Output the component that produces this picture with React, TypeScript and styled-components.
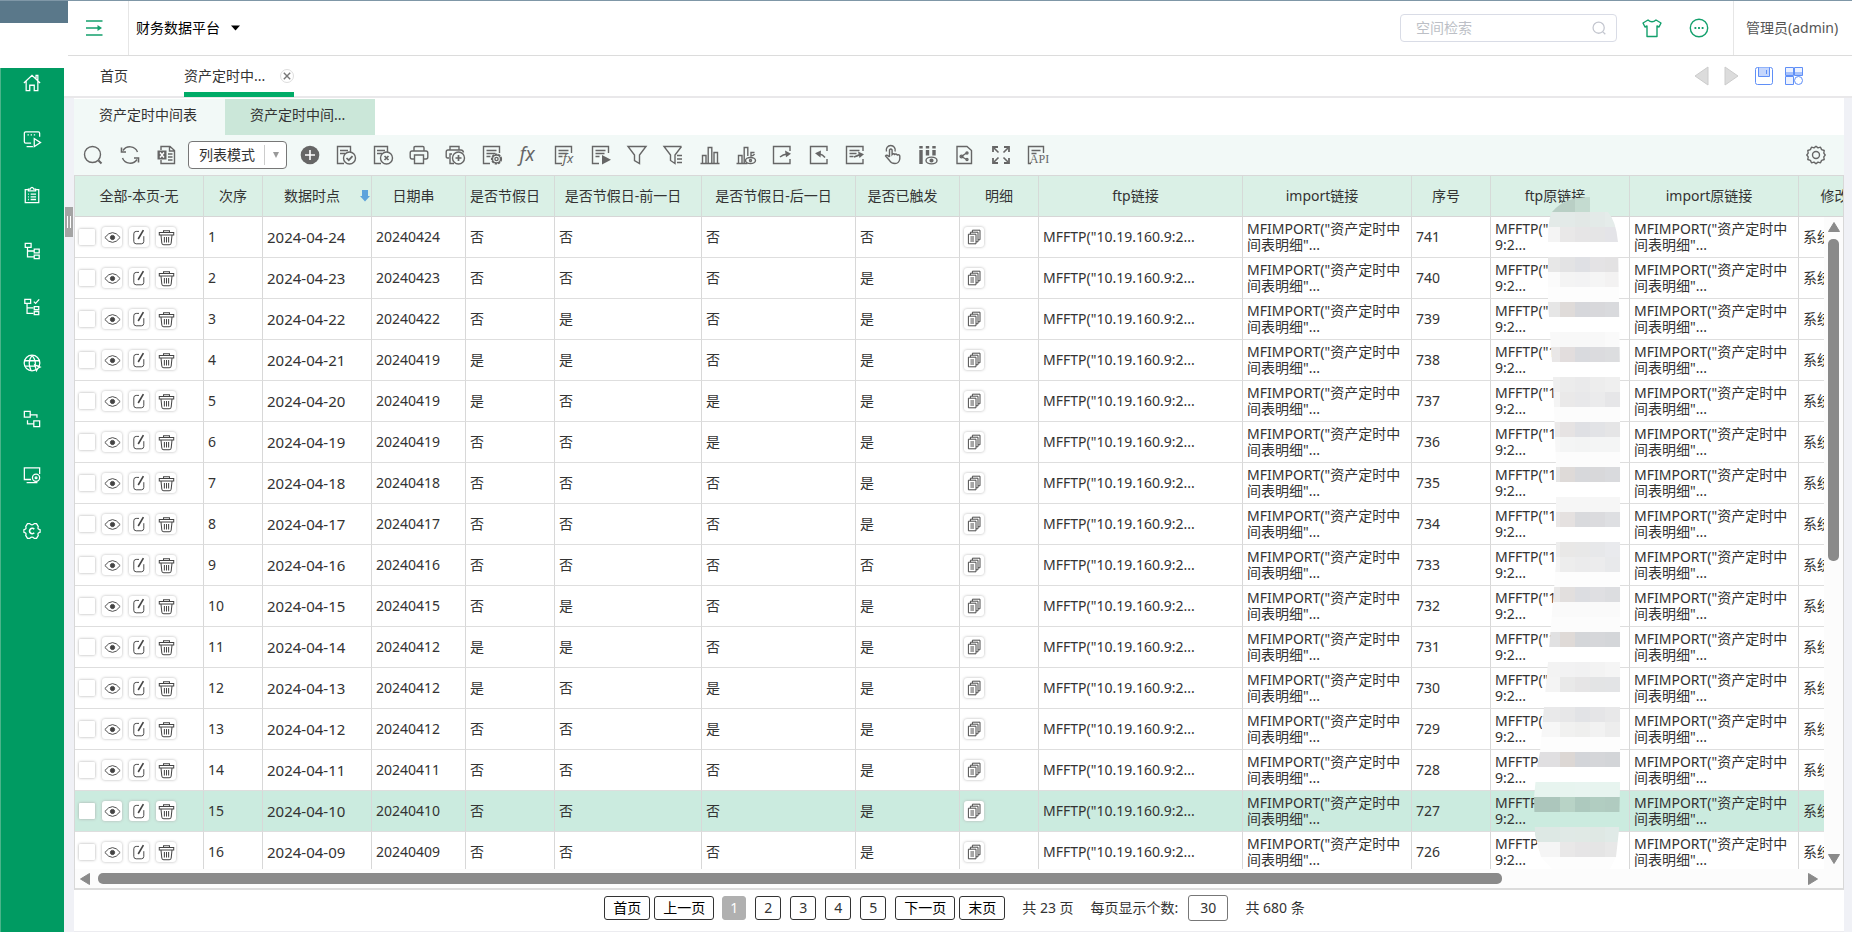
import React from 'react';
import styled, { createGlobalStyle } from 'styled-components';

const GlobalStyle = createGlobalStyle`
  *, *::before, *::after { box-sizing: border-box; }
  body {
    margin: 0;
    background: #fff;
    color: #333;
    font: 14px/20px "Noto Sans", "Noto Sans CJK SC", sans-serif;
  }
  button, input, select { font: inherit; color: inherit; margin: 0; }
  button { padding: 0; border: 0; background: none; cursor: pointer; }
  a { color: inherit; text-decoration: none; }
  svg { display: block; flex: none; overflow: visible; }
`;

/* ---------- shell ---------- */

const Shell = styled.div`
  display: flex;
  flex-direction: column;
  height: 100vh;
  min-height: 480px;
  overflow: hidden;
  border-top: 1px solid #7f97a7;
`;

const Header = styled.header`
  display: flex;
  height: 55px;
`;

const Brand = styled.div`
  width: 68px;
  flex: none;
  &::before {
    content: "";
    display: block;
    height: 22px;
    background: #5a788a;
  }
`;

const HeaderBar = styled.div`
  flex: 1;
  display: flex;
  align-items: center;
  border-bottom: 1px solid #dcdcdc;
`;

const MenuToggle = styled.button`
  align-self: stretch;
  width: 61px;
  padding-left: 18px;
  border-right: 1px solid #e6e6e6;
`;

const PlatformButton = styled.button`
  display: flex;
  align-items: center;
  gap: 11px;
  margin-left: 7px;
  color: #000;
`;

const SearchBox = styled.label`
  display: flex;
  align-items: center;
  width: 217px;
  height: 28px;
  margin-left: auto;
  padding: 0 10px 0 15px;
  border: 1px solid #d9dce6;
  border-radius: 4px;
`;

const SearchInput = styled.input`
  flex: 1;
  min-width: 0;
  padding: 0;
  border: 0;
  outline: 0;
  background: none;
  &::placeholder { color: #bcbfc6; opacity: 1; }
`;

const HeaderIcons = styled.div`
  display: flex;
  gap: 27px;
  padding: 0 24px 0 25px;
`;

const UserLink = styled.a`
  align-self: stretch;
  display: flex;
  align-items: center;
  width: 119px;
  padding-left: 12px;
  border-left: 1px solid #e6e6e6;
  color: #555;
  white-space: nowrap;
`;

const Body = styled.div`
  flex: 1;
  min-height: 0;
  display: flex;
`;

const Sidebar = styled.nav`
  display: flex;
  flex-direction: column;
  align-items: center;
  gap: 32px;
  width: 64px;
  flex: none;
  margin-top: 12px;
  padding: 3px 1px 0 0;
  border-left: 1px solid #4ab48a;
  background: #009b62;
  color: #fff;
`;

const SideLink = styled.a`
  display: flex;
  align-items: center;
  justify-content: center;
  width: 24px;
  height: 24px;
`;

const Main = styled.main`
  flex: 1;
  min-width: 0;
  display: flex;
  flex-direction: column;
`;

/* ---------- page tabs ---------- */

const PageTabs = styled.div`
  display: flex;
  align-items: stretch;
  height: 42px;
  padding-left: 36px;
  border-bottom: 2px solid #e9e8ea;
`;

const PageTab = styled.a<{ $active?: boolean }>`
  display: flex;
  align-items: center;
  justify-content: space-between;
  width: ${p => (p.$active ? '110px' : '84px')};
  margin-bottom: -1px;
  padding: ${p => (p.$active ? '3px 0 0' : '0 0 2px')};
  border-bottom: ${p => (p.$active ? '5px solid #00ab67' : '0')};
`;

const CloseButton = styled.button`
  display: flex;
  align-items: center;
  justify-content: center;
  width: 14px;
  height: 14px;
  border: 1px solid #ddd;
  border-radius: 50%;
`;

const TabTools = styled.div`
  display: flex;
  align-items: center;
  gap: 12px;
  margin-left: auto;
  padding-right: 49px;
`;

const TabArrow = styled.button`
  width: 18px;
`;

/* ---------- workspace ---------- */

const Workspace = styled.div`
  flex: 1;
  min-height: 0;
  display: flex;
  padding-right: 8px;
  background: #f0f1f6;
`;

const Splitter = styled.div`
  width: 10px;
  flex: none;
  padding: 109px 1px 0;
`;

const SplitterHandle = styled.button`
  display: flex;
  align-items: center;
  justify-content: center;
  gap: 2px;
  width: 8px;
  height: 30px;
  background: #a4a4a4;
  &::before, &::after {
    content: "";
    width: 1px;
    height: 12px;
    background: #fff;
  }
`;

const Panel = styled.section`
  flex: 1;
  min-width: 0;
  display: flex;
  flex-direction: column;
  border-bottom: 1px solid #ececf0;
  background: #fff;
`;

const SubTabs = styled.div`
  display: flex;
  height: 37px;
  padding-top: 1px;
`;

const SubTab = styled.a<{ $active?: boolean }>`
  width: ${p => (p.$active ? '150px' : '151px')};
  padding: 6px 0 0 25px;
  background: ${p => (p.$active ? '#cbe7d9' : '#f2f9f7')};
`;

const Toolbar = styled.div`
  display: flex;
  align-items: center;
  height: 40px;
  flex: none;
  padding: 0 18px 0 9px;
  background: #f2f9f7;
  color: #666;
`;

const ToolButton = styled.button`
  display: flex;
  align-items: center;
  justify-content: center;
  width: 20px;
  height: 20px;
  color: #666;
`;

const LeadTools = styled.div`
  display: flex;
  gap: 17px;
`;

const MainTools = styled.div`
  display: flex;
  justify-content: space-between;
  width: 747px;
  margin-right: auto;
`;

const ModeBox = styled.label`
  display: flex;
  align-items: center;
  width: 99px;
  height: 28px;
  margin: 0 13px 0 11px;
  border: 1px solid #777;
  border-radius: 4px;
  background: #fff;
`;

const ModeSelect = styled.select`
  appearance: none;
  flex: 1;
  height: 20px;
  padding: 0 0 0 10px;
  border: 0;
  border-right: 1px solid #ccc;
  outline: 0;
  background: none;
  color: #333;
`;

const ModeCaret = styled.span`
  margin: 0 7px 0 8px;
  border: 3px solid transparent;
  border-top: 6px solid #999;
  border-bottom: 0;
`;

/* ---------- data grid ---------- */

const GridFrame = styled.div`
  position: relative;
  flex: 1;
  min-height: 0;
  display: flex;
  flex-direction: column;
  border: 1px solid #d8d8d8;
  border-bottom: 2px solid #dcdcdc;
`;

const GridViewport = styled.div`
  position: relative;
  flex: 1;
  min-height: 0;
  overflow: hidden;
`;

const Table = styled.table`
  width: 1834px;
  table-layout: fixed;
  border-collapse: separate;
  border-spacing: 0;
`;

const HeadCell = styled.th<{ $sortable?: boolean }>`
  position: relative;
  height: 41px;
  padding: 0 ${p => (p.$sortable ? '10px' : '0')} 0 0;
  border-right: 1px solid #d6dad8;
  border-bottom: 1px solid #d6d6d6;
  background: #daf0e6;
  font-weight: 400;
  white-space: nowrap;
`;

const SortArrow = styled.span`
  position: absolute;
  top: 14px;
  right: 1px;
`;

const Row = styled.tr<{ $selected?: boolean }>`
  background: ${p => (p.$selected ? '#cbebdf' : '#fff')};
`;

const Cell = styled.td<{ $wide?: boolean }>`
  height: 41px;
  padding: 0 4px;
  border-right: 1px solid #d8d8d8;
  border-bottom: 1px solid #dedede;
  font-size: ${p => (p.$wide ? '15px' : '14px')};
  line-height: ${p => (p.$wide ? '15px' : '16px')};
  white-space: nowrap;
  overflow: hidden;
`;

const RowActions = styled.div`
  display: flex;
  align-items: center;
  gap: 7px;
`;

const RowCheck = styled.input`
  appearance: none;
  width: 16px;
  height: 16px;
  margin: 0;
  border-radius: 1px;
  background: #fff;
  box-shadow: 0 0 3px #a8a8a8;
`;

const ActionButton = styled.button`
  display: flex;
  align-items: center;
  justify-content: center;
  width: 20px;
  height: 20px;
  border-radius: 3px;
  background: #fff;
  box-shadow: 0 0 3px #b4b4b4;
  color: #444;
`;

const Mosaic = styled.svg`
  position: absolute;
  top: 21px;
  left: 1455px;
`;

const VerticalBar = styled.div`
  position: absolute;
  top: 41px;
  right: 0;
  bottom: 19px;
  width: 19px;
  display: flex;
  flex-direction: column;
  align-items: center;
  padding: 5px 0;
  background: #fcfcfc;
`;

const HorizontalBar = styled.div`
  display: flex;
  align-items: center;
  height: 19px;
  flex: none;
  padding: 0 24px 0 4px;
  background: #fcfcfc;
`;

const Track = styled.div`
  flex: 1;
  margin: 7px;
`;

const VerticalThumb = styled.div`
  width: 11px;
  height: 53%;
  border-radius: 5px;
  background: #8a8a8a;
`;

const HorizontalThumb = styled.div`
  width: 82.5%;
  height: 11px;
  border-radius: 5px;
  background: #8a8a8a;
`;

const ARROW_TURN = { up: 0, right: 90, down: 180, left: 270 };

/* ---------- pager ---------- */

const Pager = styled.nav`
  display: flex;
  align-items: center;
  justify-content: center;
  height: 41px;
  padding-bottom: 6px;
  flex: none;
`;

const PageButton = styled.button<{ $current?: boolean }>`
  min-width: ${p => (p.$current ? '24px' : '26px')};
  height: 24px;
  margin-right: 9px;
  padding: 0 5px;
  border: 1px solid ${p => (p.$current ? '#b0b0b0' : '#333')};
  border-radius: 3px;
  background: ${p => (p.$current ? '#b0b0b0' : '#fff')};
  color: ${p => (p.$current ? '#fff' : '#333')};
`;

const StepButton = styled(PageButton)<{ $tight?: boolean }>`
  min-width: 46px;
  padding: 0 8px;
  margin-right: ${p => (p.$tight ? '4px' : '8px')};
  color: #000;
`;

const PageNote = styled.span`
  margin: 0 9px;
`;

const SizeLabel = styled.label`
  display: flex;
  align-items: center;
  gap: 10px;
  margin: 0 8px;
`;

const SizeInput = styled.input`
  width: 40px;
  height: 26px;
  padding: 0;
  border: 1px solid #777;
  border-radius: 3px;
  text-align: center;
`;

/* ---------- icons ---------- */

type IconProps = { size?: number; width?: number; color?: string; children: React.ReactNode };

const Icon = ({ size = 20, width = 1.4, color = 'currentColor', children }: IconProps) => (
  <svg width={size} height={size} viewBox="0 0 20 20" fill="none" stroke={color} strokeWidth={width} aria-hidden="true">
    {children}
  </svg>
);

const Glyph = styled.text`
  stroke: none;
  fill: #666;
`;

const Arrow = ({ dir }: { dir: keyof typeof ARROW_TURN }) => (
  <svg width="12" height="10" viewBox="0 0 12 10" aria-hidden="true">
    <path d="M6 0.5L11.5 9.5H0.5Z" fill="#8a8a8a" stroke="#8a8a8a" strokeLinejoin="round" transform={`rotate(${ARROW_TURN[dir]} 6 5)`} />
  </svg>
);

const docSheet = <path d="M8 18.500H1.500v-17h13V8M4 5.500h8M4 8.500h5" />;
const sheetWide = <path d="M8 18.500H1.500v-17h16V8M4.500 5.500h10M4.500 8.500h9M4.500 11.500h4" />;
const printer = <path d="M5 6V2.700Q5 1.500 6.200 1.500H13.800Q15 1.500 15 2.700V6M5 14H3Q1.200 14 1.200 12V8Q1.200 6 3 6H17Q18.800 6 18.800 8V12Q18.800 14 17 14H15M5.500 10H14.500V18.500H5.500Z" />;
const printerBack = <path d="M5 5V1.500H14V5M4 13H2.500Q1.200 13 1.200 11.500V7Q1.200 5 3 5H16Q18 5 18.500 7.500M7 9H5V18.500H9" />;
const cog = 'M10 1.200 12 2.900 14.500 2.200 15.600 4.600 18.200 5.500 17.800 8.100 19.200 10 17.800 11.900 18.200 14.500 15.600 15.400 14.500 17.800 12 17.100 10 18.800 8 17.100 5.500 17.800 4.400 15.400 1.800 14.500 2.200 11.900 0.800 10 2.200 8.100 1.800 5.500 4.400 4.600 5.500 2.200 8 2.900Z';

const leadTools: [string, React.ReactNode][] = [
  ['搜索', <><circle cx="9.500" cy="9.500" r="8" /><path d="M15.500 15.500L18.500 18.500" strokeWidth="2" /></>],
  ['刷新', <><path d="M3 5.500A8.200 8.200 0 0 1 17.500 7M17 14.500A8.200 8.200 0 0 1 2.500 13" /><path d="M1.500 2.500V7H6M18.500 17.500V13H14" strokeWidth="1.600" /></>],
  ['导出', <><path d="M4 5V1.500h9l4.500 4v13H4V15M12.500 1.500V6h5M11 9h4.500M11 12h4.500M11 15h4.500" /><path d="M0.500 5.500h9v9H.5z" fill="#666" stroke="none" /><path d="M3 7.500l4 5M7 7.500l-4 5" stroke="#fff" /></>],
];

const mainTools: [string, React.ReactNode][] = [
  ['新增', <><circle cx="10" cy="10" r="9.300" fill="#666" stroke="none" /><path d="M10 5v10M5 10h10" stroke="#fff" strokeWidth="1.600" /></>],
  ['审核', <>{docSheet}<circle cx="13.500" cy="13" r="6" fill="#f2f9f7" /><path d="M10.500 13l2.300 2.200 3.700-4" strokeWidth="1.700" /></>],
  ['驳回', <>{docSheet}<circle cx="13.500" cy="13" r="6" fill="#f2f9f7" /><path d="M11.500 11l4 4M15.500 11l-4 4" strokeWidth="1.700" /></>],
  ['打印', printer],
  ['批量打印', <>{printerBack}<circle cx="13.500" cy="13" r="6" fill="#f2f9f7" /><path d="M13.500 10v6M10.500 13h6" strokeWidth="1.700" /></>],
  ['表单设置', <>{sheetWide}<circle cx="14.500" cy="14" r="4.800" fill="#f2f9f7" strokeWidth="1.600" strokeDasharray="2.400 1" /><circle cx="14.500" cy="14" r="4" /><circle cx="14.500" cy="14" r="1.600" /></>],
  ['公式', <Glyph x="9" y="16" textAnchor="middle" fontSize="19" fontStyle="italic">fx</Glyph>],
  ['表单公式', <>{sheetWide}<Glyph x="14" y="18" textAnchor="middle" fontSize="13" fontStyle="italic">fx</Glyph></>],
  ['执行', <>{sheetWide}<path d="M11 10v9.500l9-4.700z" fill="#666" stroke="none" /></>],
  ['筛选', <path d="M1 1.500h18L12.500 10v8.500l-5-3V10z" />],
  ['高级筛选', <path d="M18.500 1.500H1L7.500 10v5.500l4.500 3V10L18.500 1.500M14 10.500h5M14 14h5M14 17.500h5" />],
  ['图表', <path d="M0.500 18.500h19M2.500 18V10.500h3.500V18M8.200 18V2.500h3.600V18M14 18V7.500h3.500V18" />],
  ['图表预览', <><path d="M0.500 18.500h11M2.500 18V10.500h3.500V18M8.200 18V2.500h3.600V11M18.500 7.500H15V11q3-.5 3.500-2" /><ellipse cx="14.500" cy="15.500" rx="5" ry="3" /><circle cx="14.500" cy="15.500" r="1" /></>],
  ['导出文件', <><path d="M18 6V1.500H1.500v17H18V14M8 12q3-2.500 7-3" /><path d="M13 5.500l6 3.200-5 3.500z" fill="#666" stroke="none" /></>],
  ['导入文件', <><path d="M18 6V1.500H1.500v17H18V14M16 12.500q-2-3-6-3.700" /><path d="M12 5.500L6 8.200l5.500 4.300z" fill="#666" stroke="none" /></>],
  ['转出', <><path d="M18 6V1.500H1.500v17H18V14M4.500 5.500h10M4.500 8.500h7M4.500 11.500h4M9 12q3-1 6-2.500" /><path d="M13 6.500l6 2.700-4.500 3.800z" fill="#666" stroke="none" /></>],
  ['点击', <><path d="M7.500 12V5q1.300-2 2.600 0v4.500q1.300-1.500 2.600 0 1.300-1 2.600.5 2-.8 2.500 1V14q-.8 4.500-4.800 4.500t-5.500-3L3.500 11q1-2 4 1" /><path d="M4.500 6.500a4.500 4.500 0 1 1 8.500 0" /></>],
  ['列显示', <><path d="M3 1v2.500M3 5v14M9.500 1v2.500M9.500 5v5.500M16 1v2.500M16 5v5.500" strokeWidth="3.400" /><ellipse cx="13.500" cy="15.500" rx="5.500" ry="3.400" /><circle cx="13.500" cy="15.500" r="1.400" fill="#666" /></>],
  ['分享', <><path d="M3 1.500h10l4.500 4v13H3z" /><path d="M12.500 8L7.500 11.500l5 3" /><circle cx="7.500" cy="11.500" r="1.400" /><circle cx="13" cy="8" r="1" /><circle cx="13" cy="14.500" r="1" /></>],
  ['全屏', <><path d="M3 3l4.500 4.500M17 3l-4.500 4.500M3 17l4.500-4.500M17 17l-4.500-4.500" strokeWidth="1.600" /><path d="M2 7V2h5M13 2h5v5M18 13v5h-5M7 18H2v-5" strokeWidth="1.800" /></>],
  ['API', <><path d="M4 18.500H1.500v-17h15V8M4.500 5.500h9M4.500 8.500h5" /><Glyph x="12.500" y="18" textAnchor="middle" fontSize="12" fontFamily="Liberation Serif, serif">API</Glyph></>],
];

const sideIcons: [string, React.ReactNode][] = [
  ['首页', <><path d="M1 10L10 1.500 19 10M3.500 8v10.500H7.500V12.500h5v6h4V8M14.500 5V1.500h2V7" /></>],
  ['演示', <><path d="M18.500 7.500V3.500q0-1.500-1.500-1.500H3Q1.500 2 1.500 3.500V13q0 1.500 1.500 1.500H9M4 18.500h7M5 5.500h1.500M8.500 5.500h1.500M12 5.500h1.500" /><path d="M12.500 9.500v9l7-4.500z" /></>],
  ['任务', <><path d="M5.500 4H2.500v14.500h15V4h-3" /><path d="M6 5.500V3.500h2q2-4 4 0h2v2zM5.500 9h1M8.500 9h6M5.500 12h1M8.500 12h6M5.500 15h1M8.500 15h6" /></>],
  ['结构', <path d="M2.500 1.500h6.500v4.500H2.500zM5 6v10.500h7M5 10h7M12.500 8h5.500v4h-5.500zM12.500 14.500h5.500v4h-5.500z" />],
  ['权限', <path d="M2 1.500h6.500v4.500H2zM4.500 6v11h7M4.500 11h7M12.500 9.500h5v3.500h-5zM12.500 15h5v3.500h-5zM12 4l2 2 4-4.500" />],
  ['全球', <><circle cx="10" cy="10" r="8.700" /><path d="M1.500 7.500h17M2 13.500h16M10 1.500Q4.500 9 9 18.500M10 1.500Q15.500 8 13 14" /><path d="M13 12l6 2.500-2.500 1.200L15 18.500z" fill="#009b62" /></>],
  ['流程', <path d="M1.500 1.500h6.500v6.500h-6.500zM12 12h6.500v6.500H12zM8 5.500h7.500v3M12 15.500H5v-4" />],
  ['监控', <><path d="M18.500 9V2h-17v13H9M4 18.500h12" /><circle cx="14.500" cy="13" r="4" /><circle cx="14.500" cy="13" r="1" /></>],
  ['设置', <><path d="M5 1.800H7.500Q10 4.500 12.500 1.800H15L17 5.200Q15.500 8 19 8.500V11.500Q15.500 12 17 14.800L15 18.200H12.500Q10 15.500 7.500 18.200H5L3 14.800Q4.500 12 1 11.500V8.500Q4.500 8 3 5.200Z" strokeLinejoin="round" /><path d="M12.500 8a3 3 0 1 0 0 4" strokeWidth="1.800" /></>],
];

/* ---------- data ---------- */

const columns: { title: string; width: number; sortable?: boolean }[] = [
  { title: '全部-本页-无', width: 129 },
  { title: '次序', width: 59 },
  { title: '数据时点', width: 109, sortable: true },
  { title: '日期串', width: 94, sortable: true },
  { title: '是否节假日', width: 89, sortable: true },
  { title: '是否节假日-前一日', width: 147, sortable: true },
  { title: '是否节假日-后一日', width: 154, sortable: true },
  { title: '是否已触发', width: 104, sortable: true },
  { title: '明细', width: 79 },
  { title: 'ftp链接', width: 204, sortable: true },
  { title: 'import链接', width: 169, sortable: true },
  { title: '序号', width: 79, sortable: true },
  { title: 'ftp原链接', width: 139, sortable: true },
  { title: 'import原链接', width: 169, sortable: true },
  { title: '修改来源', width: 110, sortable: true },
];

const records = [
  ['20240424', '否否否否'],
  ['20240423', '否否否是'],
  ['20240422', '否是否是'],
  ['20240419', '是是否是'],
  ['20240419', '是否是是'],
  ['20240419', '否否是是'],
  ['20240418', '否否否是'],
  ['20240417', '否否否是'],
  ['20240416', '否否否否'],
  ['20240415', '否是否是'],
  ['20240412', '是是否是'],
  ['20240412', '是否是是'],
  ['20240412', '否否是是'],
  ['20240411', '否否否是'],
  ['20240410', '否否否是'],
  ['20240409', '否否否是'],
].map(([workday, flags], i) => ({
  order: i + 1,
  date: `2024-04-${String(24 - i).padStart(2, '0')}`,
  workday,
  flags: flags.split(''),
  serial: 741 - i,
}));

/* Redaction blocks: one line per 15px band, colours left to right. */
const mosaicRows = [
  'b9cfc5 b9cfc5 c4dbd0 daf0e6 daf0e6', 'e3eae8 e3eae8 e2e8e6 e3eae8 e5ecea',
  'f4f4f4 e9e8e8 e6e5e6 e5e5e6 e4e4e8', 'ffffff ffffff ffffff ffffff ffffff',
  'e7e7e7 e3e3e4 dfe0e4 e4e3e5 e3e2e3', 'fbfbfb f4f4f4 f3f3f4 f5f5f5 f3f2f2',
  'fdfdfd fdfdfd fdfdfd fdfdfd fdfdfd', 'e6e6e6 dfdbd9 d6d7db d8d8db d9dadd',
  'ffffff ffffff ffffff ffffff ffffff', 'f9f9f9 f8f8f8 f8f8f8 f8f8f8 fafafa',
  'e9e7e7 e2dddd d9dade dbdbde dcdddf', 'ffffff ffffff ffffff ffffff ffffff',
  'efefef ececec eaeaeb ededed efefef', 'f4f4f4 eae9e9 e8e8ea ebebec e6e6e8',
  'fcfcfc fcfcfc fcfcfc fcfcfc fcfcfc', 'ebe9e9 e6e3e3 dfe0e4 e2e3e6 e5e5e6',
  'f7f7f7 f4f5f5 f3f4f4 f4f5f5 f4f5f5', 'fcfcfc fcfcfc fcfcfc fcfcfc fcfcfc',
  'e5e5e5 dedad8 d7d8db d8d8da d9dadd', 'ffffff ffffff ffffff ffffff ffffff',
  'f6f6f6 f6f6f6 f6f6f6 f6f6f6 f6f6f6', 'e9e7e7 e5e1e0 d9dadd dbdbde dedfe2',
  'ffffff ffffff ffffff ffffff ffffff', 'eeeeee e9e8e7 e8e8e8 e7e8ea e9eaed',
  'f4f4f4 ededed ebebec ececed e8e9eb', 'fdfdfd fdfdfd fdfdfd fdfdfd fdfdfd',
  'e9e8e8 e2dfde dcdde1 dfdfe2 dcdde0', 'fafafa fafafa fafafa fafafa fafafa',
  'fcfcfc fcfcfc fcfcfc fcfcfc fcfcfc', 'e1e1e2 dfdad7 d4d6d9 d6d7da d4d6d9',
  'ffffff ffffff ffffff ffffff ffffff', 'f3f3f3 f2f2f3 f1f1f2 f3f3f3 f5f5f5',
  'f4f4f4 e9e9e9 e6e5e6 e3e4e5 e3e4e6', 'ffffff ffffff ffffff ffffff ffffff',
  'e9e9ea e7e7e8 e2e3e6 e5e5e7 e8e8e9', 'f7f7f7 f1f1f0 efefee f2f2f2 ededed',
  'fdfdfd fdfdfd fdfdfd fdfdfd fdfdfd', 'e0dfe1 dcd7d4 d3d5d9 d5d6d9 d3d5d8',
  'ffffff ffffff ffffff ffffff ffffff', 'e7f4ef e7f4ef e8f4f0 e7f4ef e7f4ef',
  'acc6bc b8d3c6 adc9be b1cdc1 b0cbc0', 'cbebdf cbebdf cbebdf cbebdf cbebdf',
  'dde8e4 e0e9e6 e0e9e5 dfe8e4 e0eae7', 'f5f5f5 e9e8e8 e6e5e6 e5e5e5 e8e8e8',
  'fdfdfd fdfdfd fdfdfd fdfdfd fdfdfd',
].map(line => line.split(' '));

const mosaicOutline =
  'M60 0V15H78Q86 24 88 45L89 105 90 180 90 590 89 633 86 660 80 672H22L11 660 5 638 4 600 7 570 10 555 14 510 18 465 24 392 26 365V270L23 180 18 105V45Q18 22 22 15 34 0 60 0Z';

const GearIcon = () => (
  <Icon><path d={cog} strokeLinejoin="round" /><circle cx="10" cy="10" r="3.500" /></Icon>
);

const DataRow = ({ record }: { record: (typeof records)[number] }) => (
  <Row $selected={record.order === 15}>
    <Cell>
      <RowActions>
        <RowCheck type="checkbox" aria-label={`选择第${record.order}行`} />
        <ActionButton aria-label="查看">
          <Icon size={17} width={1.1}><path d="M1 10Q10 -1.500 19 10 10 21.500 1 10Z" /><circle cx="10" cy="10" r="2.500" fill="currentColor" /></Icon>
        </ActionButton>
        <ActionButton aria-label="编辑">
          <Icon size={16} width={1.2}><path d="M10 3H6.500Q3.500 3 3.500 6V15.500Q3.500 18.500 6.500 18.500H13Q16 18.500 16 15.500V9" /><path d="M9 12.500L15.500 1.500" strokeWidth="2" /></Icon>
        </ActionButton>
        <ActionButton aria-label="删除">
          <Icon size={17} width={1.2}><path d="M1.500 4h17v3H1.500zM6.500 4V2h7v2M3.500 7l1 9.500q.2 2 2 2h7q1.800 0 2-2l1-9.500" /><path d="M7.500 9.500v6.500M10 9.500v6.500M12.500 9.500v6.500" /></Icon>
        </ActionButton>
      </RowActions>
    </Cell>
    <Cell>{record.order}</Cell>
    <Cell $wide>{record.date}</Cell>
    <Cell>{record.workday}</Cell>
    {record.flags.map((flag, i) => <Cell key={i}>{flag}</Cell>)}
    <Cell>
      <ActionButton aria-label="明细">
        <Icon size={16} width={1.2}><path d="M3 6.500h9.500v12H3zM5.500 6.500V4h9.500v12h-2.500M8 4V1.500h9.500v12H15" /><path d="M5.500 10h4.500M5.500 12.500h4.500M5.500 15h4.500" /></Icon>
      </ActionButton>
    </Cell>
    <Cell>MFFTP("10.19.160.9:2...</Cell>
    <Cell>MFIMPORT("资产定时中<br />间表明细"...</Cell>
    <Cell>{record.serial}</Cell>
    <Cell>MFFTP("10.19.160.<br />9:2...</Cell>
    <Cell>MFIMPORT("资产定时中<br />间表明细"...</Cell>
    <Cell>系统</Cell>
  </Row>
);

export default function App() {
  return (
    <>
      <GlobalStyle />
      <Shell>
        <Header>
          <Brand />
          <HeaderBar>
            <MenuToggle aria-label="菜单">
              <svg width="17" height="16" viewBox="0 0 17 16" fill="none" stroke="#13a06c" strokeWidth="1.500">
                <path d="M0 1h16.500M0 8h12M0 15h16.500" /><path d="M11.500 5l4.500 3-4.500 3z" fill="#13a06c" stroke="none" />
              </svg>
            </MenuToggle>
            <PlatformButton>
              财务数据平台
              <svg width="9" height="6" viewBox="0 0 9 6"><path d="M0 0.500h9L4.500 5.500z" fill="#000" /></svg>
            </PlatformButton>
            <SearchBox>
              <SearchInput placeholder="空间检索" aria-label="空间检索" />
              <Icon size={14} color="#c3c6cf" width={1.8}><circle cx="9.500" cy="9.500" r="8" /><path d="M15.500 15.500L19 19" /></Icon>
            </SearchBox>
            <HeaderIcons>
              <ToolButton aria-label="皮肤">
                <Icon color="#13a06c"><path d="M6 2L1 5l2 4 2-1v10.500h10V8l2 1 2-4-5-3q-4 3.500-8 0z" strokeLinejoin="round" /></Icon>
              </ToolButton>
              <ToolButton aria-label="更多">
                <Icon color="#13a06c"><circle cx="10" cy="10" r="8.700" /><path d="M5.500 10h1.800M9.100 10h1.800M12.700 10h1.800" strokeWidth="1.800" /></Icon>
              </ToolButton>
            </HeaderIcons>
            <UserLink href="#user">管理员(admin)</UserLink>
          </HeaderBar>
        </Header>

        <Body>
          <Sidebar>
            {sideIcons.map(([label, art]) => (
              <SideLink key={label} href="#nav" aria-label={label}><Icon size={18}>{art}</Icon></SideLink>
            ))}
          </Sidebar>
          <Main>
            <PageTabs>
              <PageTab href="#home">首页</PageTab>
              <PageTab href="#asset" $active>
                资产定时中...
                <CloseButton aria-label="关闭"><Icon size={8} width={3.5} color="#777"><path d="M2 2l16 16M18 2L2 18" /></Icon></CloseButton>
              </PageTab>
              <TabTools>
                <TabArrow aria-label="向左"><svg width="14" height="18"><path d="M0 9L13 0v18z" fill="#dcdcdc" stroke="#ccc" /></svg></TabArrow>
                <TabArrow aria-label="向右"><svg width="14" height="18"><path d="M13 9L0 0v18z" fill="#dcdcdc" stroke="#ccc" /></svg></TabArrow>
                <TabArrow aria-label="保存">
                  <svg width="18" height="18" fill="none" stroke="#5f8ff7"><rect x="0.500" y="0.500" width="17" height="17" rx="2" /><path d="M3.500 0.500v9h11v-9" fill="#c5d6fc" /><path d="M11.500 3v4" /></svg>
                </TabArrow>
                <TabArrow aria-label="布局">
                  <svg width="18" height="18" fill="none" stroke="#5f8ff7"><path d="M0.500 0.500h8v8h-8zM9.500 0.500h8v8h-8zM0.500 9.500h8v8h-8z" fill="#edf2fe" /><path d="M1 6.500h7M10 6.500h7" stroke="#a8c2fb" strokeWidth="3" /><circle cx="13.500" cy="13.500" r="4" /></svg>
                </TabArrow>
              </TabTools>
            </PageTabs>

            <Workspace>
              <Splitter><SplitterHandle aria-label="收起" /></Splitter>
              <Panel>
                <SubTabs>
                  <SubTab href="#sub1">资产定时中间表</SubTab>
                  <SubTab href="#sub2" $active>资产定时中间...</SubTab>
                </SubTabs>
                <Toolbar>
                  <LeadTools>
                    {leadTools.map(([label, art]) => (
                      <ToolButton key={label} aria-label={label}><Icon>{art}</Icon></ToolButton>
                    ))}
                  </LeadTools>
                  <ModeBox>
                    <ModeSelect aria-label="显示模式"><option>列表模式</option></ModeSelect>
                    <ModeCaret />
                  </ModeBox>
                  <MainTools>
                    {mainTools.map(([label, art]) => (
                      <ToolButton key={label} aria-label={label}><Icon>{art}</Icon></ToolButton>
                    ))}
                  </MainTools>
                  <ToolButton aria-label="设置"><GearIcon /></ToolButton>
                </Toolbar>

                <GridFrame>
                  <GridViewport>
                    <Table>
                      <colgroup>{columns.map(c => <col key={c.title} width={c.width} />)}</colgroup>
                      <thead>
                        <tr>
                          {columns.map(c => (
                            <HeadCell key={c.title} $sortable={c.sortable}>
                              {c.title}
                              {c.title === '数据时点' && (
                                <SortArrow>
                                  <svg width="10" height="12"><path d="M2 0h6v6h2L5 11.500 0 6h2z" fill="#5ea3dc" /></svg>
                                </SortArrow>
                              )}
                            </HeadCell>
                          ))}
                        </tr>
                      </thead>
                      <tbody>{records.map(r => <DataRow key={r.order} record={r} />)}</tbody>
                    </Table>
                    <Mosaic width="100" height="675" aria-hidden="true">
                      <clipPath id="redaction"><path d={mosaicOutline} /></clipPath>
                      <g clipPath="url(#redaction)" shapeRendering="crispEdges">
                        {mosaicRows.map((row, y) => row.map((c, x) => (
                          <rect key={`${y}-${x}`} x={x ? 15 + x * 15 : 0} y={y * 15} width={x ? 15 : 30} height="15" fill={`#${c}`} />
                        )))}
                      </g>
                    </Mosaic>
                  </GridViewport>
                  <HorizontalBar>
                    <Arrow dir="left" />
                    <Track><HorizontalThumb /></Track>
                    <Arrow dir="right" />
                  </HorizontalBar>
                  <VerticalBar>
                    <Arrow dir="up" />
                    <Track><VerticalThumb /></Track>
                    <Arrow dir="down" />
                  </VerticalBar>
                </GridFrame>

                <Pager>
                  <StepButton $tight>首页</StepButton>
                  <StepButton>上一页</StepButton>
                  <PageButton $current>1</PageButton>
                  {[2, 3, 4, 5].map(n => <PageButton key={n}>{n}</PageButton>)}
                  <StepButton $tight>下一页</StepButton>
                  <StepButton>末页</StepButton>
                  <PageNote>共 23 页</PageNote>
                  <SizeLabel>每页显示个数: <SizeInput defaultValue="30" /></SizeLabel>
                  <PageNote>共 680 条</PageNote>
                </Pager>
              </Panel>
            </Workspace>
          </Main>
        </Body>
      </Shell>
    </>
  );
}
